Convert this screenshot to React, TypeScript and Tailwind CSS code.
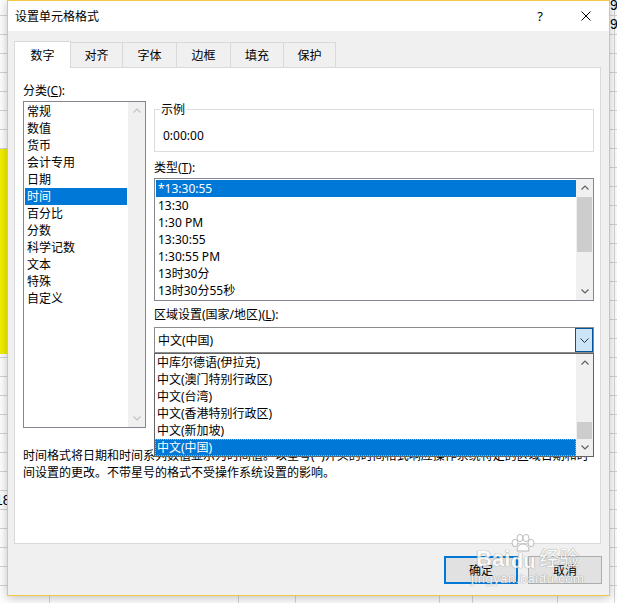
import React from "react";

const F = "font-['Noto_Sans','Noto_Sans_CJK_SC',sans-serif]";

const categories = ["常规", "数值", "货币", "会计专用", "日期", "时间", "百分比", "分数", "科学记数", "文本", "特殊", "自定义"];
const types = ["*13:30:55", "13:30", "1:30 PM", "13:30:55", "1:30:55 PM", "13时30分", "13时30分55秒"];
const locales = ["中库尔德语(伊拉克)", "中文(澳门特别行政区)", "中文(台湾)", "中文(香港特别行政区)", "中文(新加坡)", "中文(中国)"];

const tabs = [
  { label: "数字", w: "w-[57px]" },
  { label: "对齐", w: "w-[52px]" },
  { label: "字体", w: "w-[54px]" },
  { label: "边框", w: "w-[54px]" },
  { label: "填充", w: "w-[53px]" },
  { label: "保护", w: "w-[52px]" },
];

const Chevron = ({ dir, color }: { dir: "up" | "down"; color: string }) => (
  <svg width="8" height="5" viewBox="0 0 8 5" fill="none">
    <path d={dir === "up" ? "M0.5 4.5L4 1L7.5 4.5" : "M0.5 0.5L4 4L7.5 0.5"} stroke={color} strokeWidth="1.2" />
  </svg>
);

const ScrollBar = ({ trackClass = "", thumbClass, color }: { trackClass?: string; thumbClass?: string; color: string }) => (
  <div className="w-[17px] h-full shrink-0 flex flex-col bg-[#f0f0f0]">
    <div className="h-[17px] flex items-center justify-center"><Chevron dir="up" color={color} /></div>
    <div className={`flex-1 flex flex-col ${trackClass}`}>{thumbClass && <div className={`mx-[1px] bg-[#cdcdcd] ${thumbClass}`} />}</div>
    <div className="h-[17px] flex items-center justify-center"><Chevron dir="down" color={color} /></div>
  </div>
);

const Background = () => (
  <div className="absolute inset-0 bg-white">
    <div className="h-[16px] border-b border-[#d4d4d4]" />
    {Array.from({ length: 31 }).map((_, i) => (
      <div key={i} className="h-[19px] border-b border-[#d4d4d4]" />
    ))}
    <div className="absolute left-0 top-[149px] w-[9px] h-[205px] bg-[#f2f000]" />
    <div className="absolute left-[614px] top-0 w-[1px] h-full bg-[#d4d4d4]" />
    {["left-[49px]", "left-[238px]", "left-[295px]", "left-[439px]", "left-[472px]", "left-[557px]"].map((l) => (
      <div key={l} className={`absolute ${l} top-[590px] w-[1px] h-[13px] bg-[#d4d4d4]`} />
    ))}
    <div className="absolute left-[610px] top-[-3px] text-[14px] leading-[17px] font-['Liberation_Sans',sans-serif] text-black">9</div>
    <div className="absolute left-[610px] top-[16px] text-[14px] leading-[17px] font-['Liberation_Sans',sans-serif] text-black">9</div>
    <div className="absolute left-[-5px] top-[492px] text-[14px] leading-[17px] font-['Liberation_Sans',sans-serif] text-black">18</div>
  </div>
);

const Watermark = () => (
  <div className="absolute left-[471px] top-[532px] z-30 pointer-events-none flex flex-col items-center opacity-80 text-white [text-shadow:0_0_1px_#8a8a8a,0_0_1px_#8a8a8a]">
    <div className="flex items-end h-[38px]">
      <span className="text-[22px] leading-[22px] font-bold font-['Liberation_Sans',sans-serif]">Bai</span>
      <div className="flex flex-col items-center">
        <svg width="26" height="18" viewBox="0 0 26 18" fill="#fff" stroke="#9a9a9a" strokeWidth="0.8">
          <ellipse cx="5" cy="9" rx="3" ry="3.6" />
          <ellipse cx="10" cy="4" rx="3" ry="3.6" />
          <ellipse cx="16" cy="4" rx="3" ry="3.6" />
          <ellipse cx="21" cy="9" rx="3" ry="3.6" />
          <path d="M7 17 C7 12 10 10 13 10 C16 10 19 12 19 17 Z" />
        </svg>
        <span className="text-[20px] leading-[18px] font-bold font-['Liberation_Sans',sans-serif]">du</span>
      </div>
      <span className={`ml-[3px] text-[20px] leading-[22px] ${F}`}>经验</span>
    </div>
    <span className="mt-[2px] text-[13px] leading-[13px] tracking-[0.5px] font-['Liberation_Sans',sans-serif]">jingyan.baidu.com</span>
  </div>
);

export default function App() {
  return (
    <div className={`relative w-[617px] h-[603px] overflow-hidden text-[12px] text-black ${F}`}>
      <Background />

      {/* dialog window */}
      <div className="absolute left-[7px] top-0 w-[603px] h-[596px] border border-[#f0c845] bg-[#f0f0f0] flex flex-col shadow-[0_2px_10px_rgba(0,0,0,0.25)]">
        <div className="h-[30px] bg-white flex items-center justify-between">
          <span className="pl-[7px] leading-[17px]">设置单元格格式</span>
          <div className="flex">
            <div className="w-[46px] h-[30px] flex items-center justify-center text-[13px] leading-[17px]">?</div>
            <div className="w-[46px] h-[30px] flex items-center justify-center">
              <svg width="10" height="10" viewBox="0 0 10 10"><path d="M0.5 0.5L9.5 9.5M9.5 0.5L0.5 9.5" stroke="#000" strokeWidth="1" /></svg>
            </div>
          </div>
        </div>

        <div className="flex flex-col pl-[6px] pt-[10px]">
          {/* tabs */}
          <div className="flex items-end h-[26px]">
            {tabs.map((t, i) =>
              i === 0 ? (
                <div key={t.label} className={`${t.w} h-[27px] -mb-[1px] relative z-10 bg-white border border-b-0 border-[#d9d9d9] flex items-center justify-center leading-[17px]`}>{t.label}</div>
              ) : (
                <div key={t.label} className={`${t.w} h-[25px] bg-[#f0f0f0] border-t border-r border-[#d9d9d9] flex items-center justify-center leading-[17px]`}>{t.label}</div>
              )
            )}
          </div>

          {/* panel */}
          <div className="w-[587px] h-[477px] border border-[#d9d9d9] bg-white pl-[8px] pt-[14px] flex flex-col">
            <div className="flex items-start gap-[8px]">
              <div className="w-[123px] flex flex-col">
                <div className="h-[17px] leading-[17px]">分类(<span className="underline">C</span>):</div>
                <div className="mt-[2px] h-[327px] border border-[#828790] bg-white flex">
                  <div className="flex-1 pt-[1px] px-[1px]">
                    {categories.map((c) => (
                      <div key={c} className={`h-[17px] leading-[17px] pl-[2px] ${c === "时间" ? "bg-[#0078d7] text-white" : ""}`}>{c}</div>
                    ))}
                  </div>
                  <ScrollBar color="#c2c2c2" />
                </div>
              </div>

              <div className="w-[440px] flex flex-col">
                <div className="mt-[27px] h-[43px] relative border border-[#dcdcdc] pt-[17px] pl-[8px] leading-[17px]">
                  <span className="absolute -top-[9px] left-[5px] bg-white px-[1px] leading-[17px]">示例</span>
                  0:00:00
                </div>
                <div className="mt-[7px] h-[17px] leading-[17px]">类型(<span className="underline">T</span>):</div>
                <div className="mt-[2px] h-[123px] border border-[#828790] bg-white flex">
                  <div className="flex-1 pt-[1px] pl-[1px]">
                    {types.map((t, i) => (
                      <div key={t + i} className={`h-[17px] leading-[17px] pl-[2px] ${i === 0 ? "bg-[#0078d7] text-white" : ""}`}>{t}</div>
                    ))}
                  </div>
                  <ScrollBar color="#606060" thumbClass="mt-[1px] h-[55px]" />
                </div>
                <div className="mt-[5px] h-[17px] leading-[17px]">区域设置(国家/地区)(<span className="underline">L</span>):</div>
                <div className="mt-[4px] relative">
                  <div className="h-[26px] border border-[#8c8c8c] bg-white flex items-stretch">
                    <div className="flex-1 pl-[3px] flex items-center leading-[17px]">中文(中国)</div>
                    <div className="w-[18px] bg-[#cce4f7] border border-[#005499] flex items-center justify-center">
                      <svg width="9" height="5" viewBox="0 0 9 5" fill="none"><path d="M0.5 0.5L4.5 4.5L8.5 0.5" stroke="#333" strokeWidth="1" /></svg>
                    </div>
                  </div>
                  {/* open drop-down list */}
                  <div className="absolute left-0 top-[26px] w-[440px] h-[104px] z-20 border border-[#646464] bg-white flex">
                    <div className="flex-1">
                      {locales.map((l, i) => (
                        <div key={l} className={`h-[17px] leading-[15px] pl-[1px] border ${i === locales.length - 1 ? "bg-[#0078d7] text-white border-dotted border-[#e9a847]" : "border-transparent"}`}>{l}</div>
                      ))}
                    </div>
                    <ScrollBar color="#606060" trackClass="justify-end" thumbClass="h-[17px]" />
                  </div>
                </div>
              </div>
            </div>

            <div className="mt-[19px] leading-[17px] whitespace-nowrap">
              <div>时间格式将日期和时间系列数值显示为时间值。以星号(*)开头的时间格式响应操作系统特定的区域日期和时</div>
              <div>间设置的更改。不带星号的格式不受操作系统设置的影响。</div>
            </div>
          </div>

          {/* buttons */}
          <div className="mt-[12px] mr-[7px] flex justify-end gap-[10px]">
            <div className="w-[74px] h-[28px] border-2 border-[#0078d7] bg-[#e1e1e1] flex items-center justify-center leading-[17px]">确定</div>
            <div className="w-[74px] h-[28px] border border-[#adadad] bg-[#e1e1e1] flex items-center justify-center leading-[17px]">取消</div>
          </div>
        </div>
      </div>

      <Watermark />
    </div>
  );
}
